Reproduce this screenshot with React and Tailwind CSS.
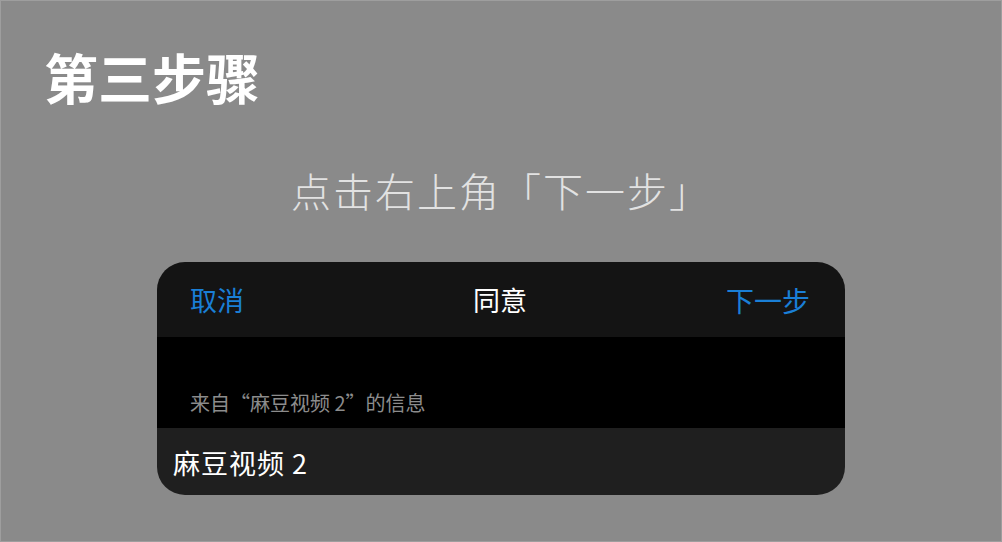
export default function App() {
  return (
    <div
      className="w-[1002px] h-[542px] bg-[#8a8a8a] border border-[#9e9e9e] flex flex-col"
      style={{ fontFamily: '"Noto Sans CJK SC", "Noto Sans", sans-serif' }}
    >
      {/* Step title */}
      <h1 className="pl-[43px] pt-[49px] text-[54px] leading-none font-bold text-white">第三步骤</h1>
      <p className="mt-[66px] text-center text-[40px] leading-none tracking-[2px] text-[#e2e2e2] font-light">点击右上角「下一步」</p>

      {/* Share sheet mock */}
      <div className="mx-auto mt-[52px] w-[688px] h-[233px] rounded-[28px] overflow-hidden flex flex-col">
        <div className="h-[75px] bg-[#141414] grid grid-cols-3 items-center pl-[33px] pr-[35px]">
          <span className="text-[27px] leading-none text-[#1a7fd6]">取消</span>
          <span className="text-center text-[27px] leading-none text-white">同意</span>
          <span className="text-right text-[28px] leading-none text-[#1a7fd6]">下一步</span>
        </div>
        <div className="h-[91px] bg-black flex items-end pl-[33px] pb-[15px]">
          <span className="text-[20px] leading-none text-[#8c8c8c]">来自“麻豆视频 2”的信息</span>
        </div>
        <div className="flex-1 bg-[#1f1f1f] flex items-center pl-[16px] pt-[2px]">
          <span className="text-[27px] leading-none text-white tracking-[1px]">麻豆视频 2</span>
        </div>
      </div>
    </div>
  );
}
